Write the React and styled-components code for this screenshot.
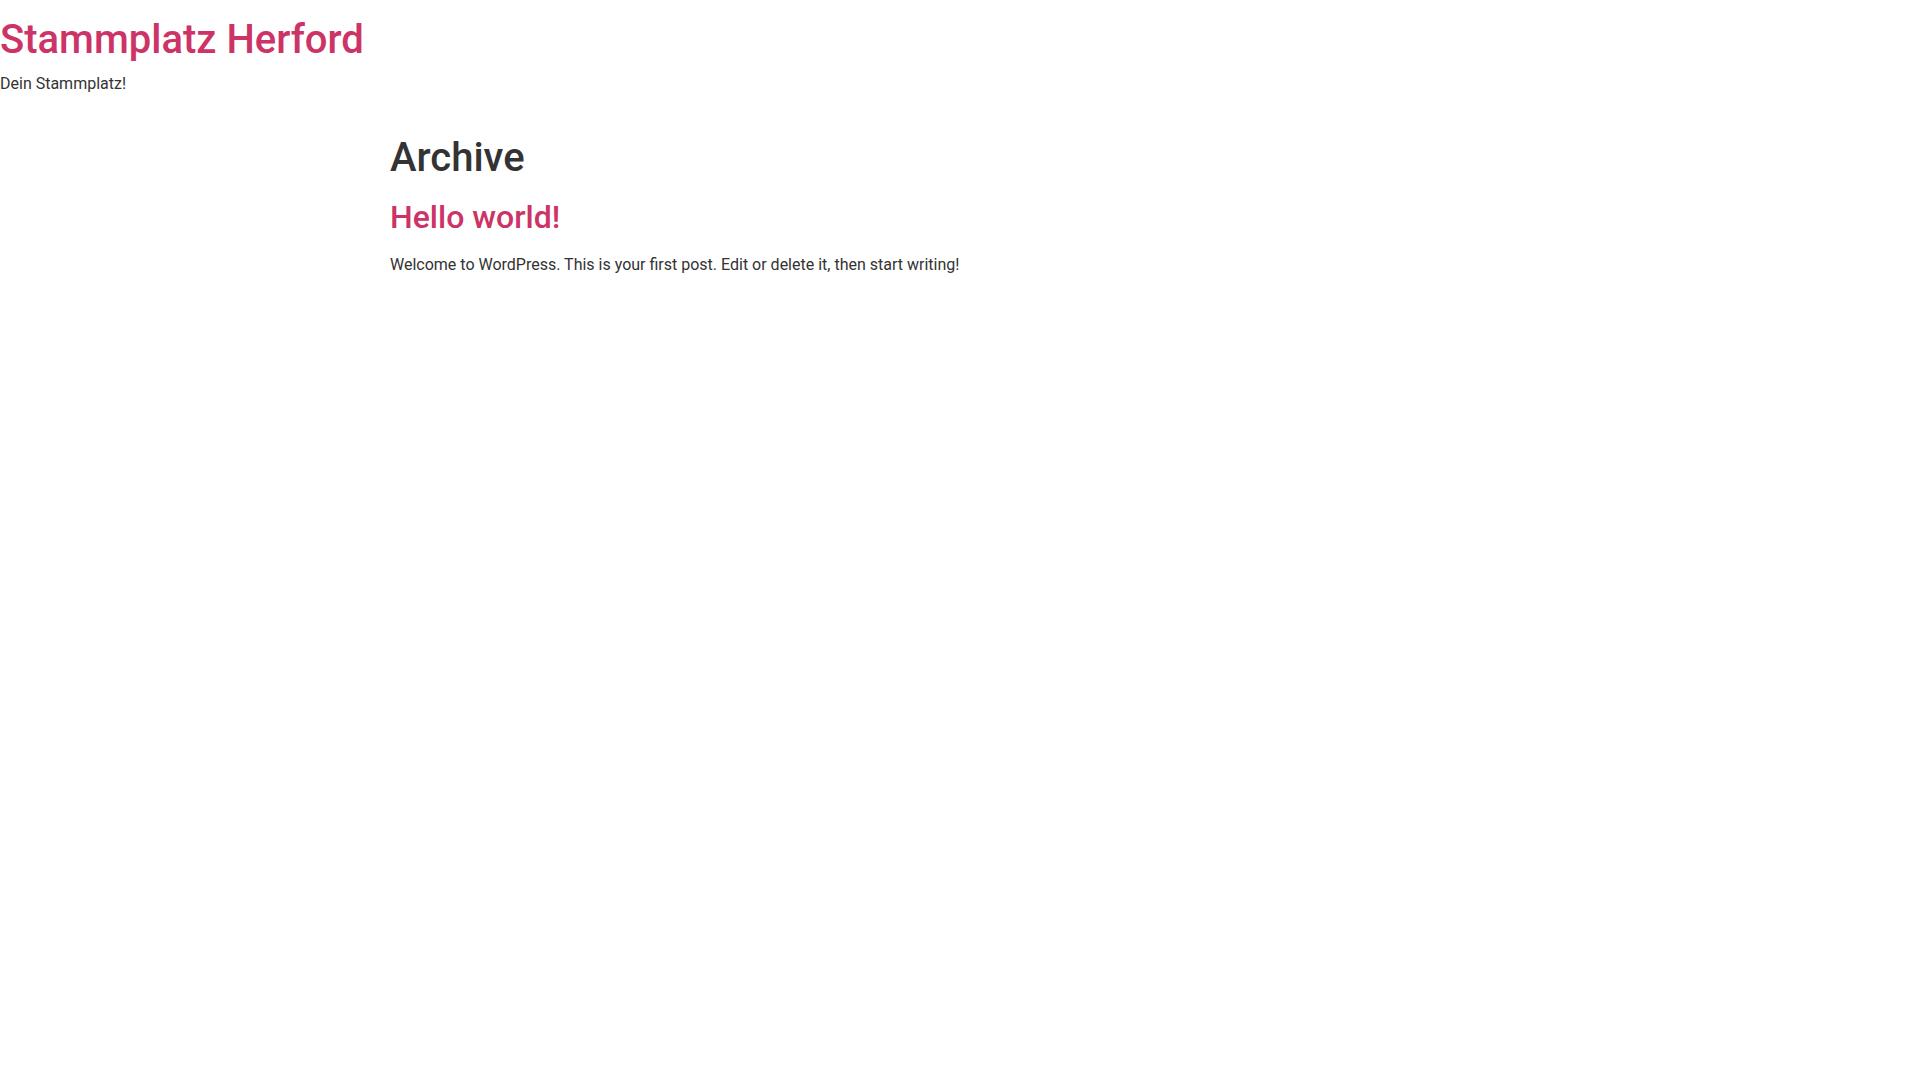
import React from "react";
import styled, { createGlobalStyle } from "styled-components";

const Global = createGlobalStyle`
  html, body { margin: 0; padding: 0; background: #fff; }
  body {
    font-family: Roboto, "Liberation Sans", Arial, sans-serif;
    font-size: 16px;
    line-height: 1.5;
    color: #333;
  }
  * { box-sizing: border-box; }
`;

const Header = styled.header`
  padding: 16px 0 0;
`;

const SiteTitle = styled.h1`
  margin: 0 0 8px;
  font-size: 40px;
  font-weight: 500;
  line-height: 1.2;
  a { color: #cc3366; text-decoration: none; }
`;

const Tagline = styled.p`
  margin: 0;
  font-size: 16px;
  line-height: 24px;
  color: #333;
`;

const Main = styled.main`
  max-width: 1140px;
  margin: 38px auto 0;
`;

const PageTitle = styled.h1`
  margin: 0 0 16px;
  font-size: 40px;
  font-weight: 500;
  line-height: 1.2;
  color: #333;
`;

const PostTitle = styled.h2`
  margin: 0 0 17px;
  font-size: 32px;
  font-weight: 500;
  line-height: 1.2;
  a { color: #cc3366; text-decoration: none; }
`;

const Excerpt = styled.p`
  margin: 0;
  font-size: 16px;
  line-height: 24px;
`;

export default function App() {
  return (
    <>
      <Global />
      <Header>
        <SiteTitle><a href="#">Stammplatz Herford</a></SiteTitle>
        <Tagline>Dein Stammplatz!</Tagline>
      </Header>
      <Main>
        <PageTitle>Archive</PageTitle>
        <article>
          <PostTitle><a href="#">Hello world!</a></PostTitle>
          <Excerpt>Welcome to WordPress. This is your first post. Edit or delete it, then start writing!</Excerpt>
        </article>
      </Main>
    </>
  );
}
